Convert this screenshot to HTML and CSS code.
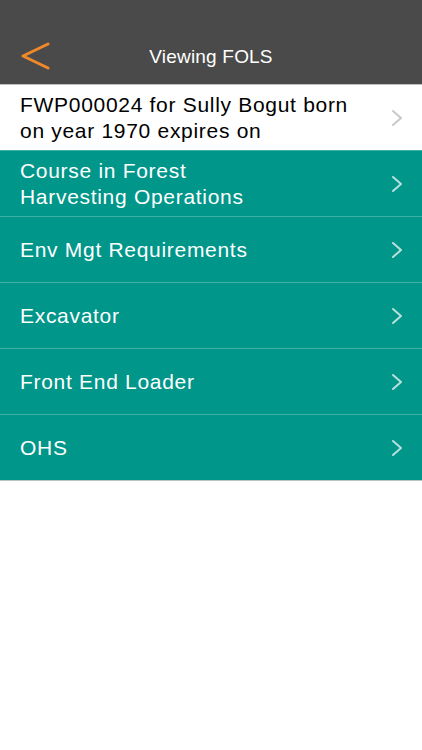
FILE: index.html
```html
<!DOCTYPE html>
<html lang="en">
<head>
  <meta charset="UTF-8">
  <meta name="viewport" content="width=device-width, initial-scale=1">
  <title>Viewing FOLS</title>
  <link rel="stylesheet" href="styles.css">
</head>
<body>
  <!-- Navigation bar -->
  <header class="navbar">
    <div class="status-bar"></div>
    <div class="nav-row">
      <a class="back" href="#">
        <svg width="30" height="30" viewBox="0 0 30 30">
          <polyline points="27,3 2,15 27,27" fill="none" stroke="#f0892a" stroke-width="3" stroke-linecap="round" stroke-linejoin="round"/>
        </svg>
      </a>
      <h1>Viewing FOLS</h1>
    </div>
  </header>

  <!-- Licence list -->
  <ul class="list">
    <li class="row row-head">
      <span class="row-text">FWP000024 for Sully Bogut born on year 1970 expires on</span>
      <svg class="chev" width="12" height="18" viewBox="0 0 12 18"><polyline points="2,2 10,9 2,16"/></svg>
    </li>
    <li class="row">
      <span class="row-text">Course in Forest<br>Harvesting Operations</span>
      <svg class="chev" width="12" height="18" viewBox="0 0 12 18"><polyline points="2,2 10,9 2,16"/></svg>
    </li>
    <li class="row">
      <span class="row-text">Env Mgt Requirements</span>
      <svg class="chev" width="12" height="18" viewBox="0 0 12 18"><polyline points="2,2 10,9 2,16"/></svg>
    </li>
    <li class="row">
      <span class="row-text">Excavator</span>
      <svg class="chev" width="12" height="18" viewBox="0 0 12 18"><polyline points="2,2 10,9 2,16"/></svg>
    </li>
    <li class="row">
      <span class="row-text">Front End Loader</span>
      <svg class="chev" width="12" height="18" viewBox="0 0 12 18"><polyline points="2,2 10,9 2,16"/></svg>
    </li>
    <li class="row">
      <span class="row-text">OHS</span>
      <svg class="chev" width="12" height="18" viewBox="0 0 12 18"><polyline points="2,2 10,9 2,16"/></svg>
    </li>
  </ul>
</body>
</html>
```

FILE: styles.css
```css
/* Global Styles */
body {
  font-family: "Liberation Sans", Arial, sans-serif;
  background: #fff;
  margin: 0;
  padding: 0;
}
.navbar {
  background: #4a4a4a;
  color: white;
  border-bottom: 1px solid #bdbdbd;
}
.status-bar {
  height: 28px;
}
.nav-row {
  height: 56px;
  display: flex;
  align-items: center;
  justify-content: center;
  position: relative;
}
.nav-row h1 {
  margin: 0 0 -2px 0;
  font-size: 19px;
  font-weight: normal;
  letter-spacing: 0.2px;
}
.back {
  position: absolute;
  left: 21px;
  top: 13px;
  display: block;
  height: 30px;
}
.list {
  list-style: none;
  margin: 0;
  padding: 0;
  border-bottom: 1px solid #b9c4c2;
}
.row {
  height: 65px;
  display: flex;
  align-items: center;
  padding: 0 19px 0 20px;
  background: #009689;
  color: white;
  font-size: 21px;
  line-height: 26px;
  letter-spacing: 0.7px;
  border-top: 1px solid #3fb0a6;
}
.row-head {
  background: white;
  color: black;
  border-top: none;
}
.row-text {
  flex: 1;
  max-width: 345px;
}
.chev {
  margin-left: auto;
  fill: none;
  stroke: #b9e0dc;
  stroke-width: 2;
  stroke-linecap: round;
  stroke-linejoin: round;
}
.row-head .chev {
  stroke: #c7c7cc;
}
```
